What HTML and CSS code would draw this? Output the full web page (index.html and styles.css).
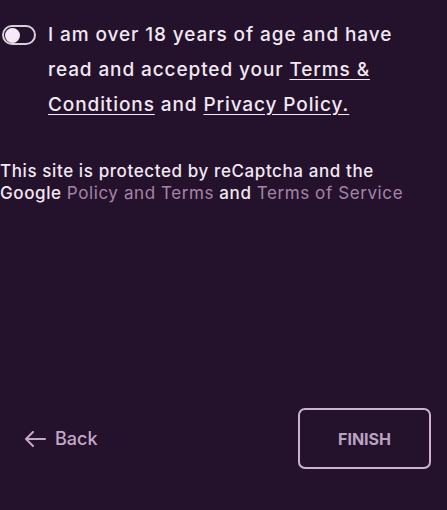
FILE: index.html
```html
<!DOCTYPE html>
<html lang="en">
<head>
    <meta charset="UTF-8">
    <meta name="viewport" content="width=device-width, initial-scale=1.0">
    <title>Finish</title>
    <link rel="stylesheet" href="styles.css">
</head>
<body>
    <div class="page">
        <!-- Consent -->
        <label class="consent">
            <span class="toggle"><span class="knob"></span></span>
            <span class="consent-text">I am over 18 years of age and have read and accepted your <a href="#">Terms &amp; Conditions</a> and <a href="#">Privacy Policy.</a></span>
        </label>

        <!-- reCaptcha note -->
        <p class="captcha">This site is protected by reCaptcha and the Google <a href="#">Policy and Terms</a> and <a href="#">Terms of Service</a></p>

        <!-- Footer -->
        <div class="actions">
            <a class="back" href="#">
                <svg width="22" height="16" viewBox="0 0 22 16" fill="none" stroke="currentColor" stroke-width="2" stroke-linecap="round" stroke-linejoin="round">
                    <path d="M21 8H2M9 1L2 8l7 7"/>
                </svg>
                Back
            </a>
            <button class="finish" type="button">FINISH</button>
        </div>
    </div>
</body>
</html>
```

FILE: styles.css
```css
body {
    margin: 0;
    background-color: #24122c;
    font-family: Inter, "DejaVu Sans", sans-serif;
    font-weight: 500;
    color: #f2e8f2;
}

.page {
    height: 510px;
    display: flex;
    flex-direction: column;
}

.consent {
    display: flex;
    gap: 12px;
    padding: 17px 0 0 2px;
    font-size: 19px;
    line-height: 35px;
}

.toggle {
    flex: none;
    width: 28px;
    height: 16px;
    margin-top: 8px;
    border: 2px solid #d8d0d8;
    border-radius: 10px;
    display: flex;
    align-items: center;
    padding: 0 1px;
}

.knob {
    width: 15px;
    height: 15px;
    border-radius: 50%;
    background-color: #f6eaf8;
}

.consent-text {
    max-width: 370px;
    letter-spacing: 0.9px;
}

.consent-text a {
    color: #f2e8f2;
    text-decoration: underline;
    text-underline-offset: 3px;
}

.captcha {
    max-width: 410px;
    margin: 38px 0 0;
    font-size: 17px;
    line-height: 22px;
    letter-spacing: 0.6px;
}

.captcha a {
    color: #a684a8;
    font-weight: 400;
    text-decoration: none;
}

.actions {
    margin-top: auto;
    margin-bottom: 41px;
    display: flex;
    align-items: center;
    justify-content: space-between;
    padding: 0 16px 0 24px;
}

.back {
    display: flex;
    align-items: center;
    gap: 9px;
    color: #c4a8c6;
    text-decoration: none;
    font-size: 18px;
}

.finish {
    width: 133px;
    height: 61px;
    background: transparent;
    border: 2px solid #cdb2d0;
    border-radius: 7px;
    color: #b9a2c0;
    font-family: inherit;
    font-size: 16px;
    font-weight: 700;
}
```
